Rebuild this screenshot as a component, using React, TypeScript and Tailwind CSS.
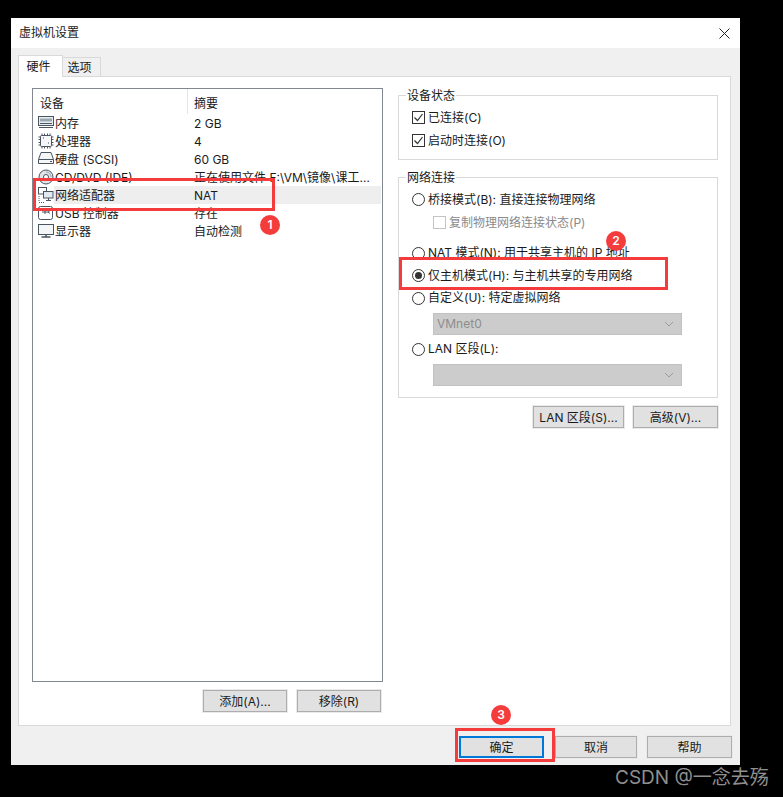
import type { ReactNode } from "react";

const stroke = "#4a5560";

function MemoryIcon() {
  return (
    <svg width="16" height="16" viewBox="0 0 16 16" fill="none" stroke={stroke}>
      <rect x="0.5" y="1.5" width="15" height="9" fill="#e8edf1" />
      <rect x="2" y="3.5" width="12" height="3" fill="#9aa7b2" stroke="none" />
      <path d="M2 8.5h12M1 12.5h14" />
    </svg>
  );
}

function CpuIcon() {
  return (
    <svg width="16" height="16" viewBox="0 0 16 16" fill="none" stroke={stroke}>
      <rect x="2.5" y="2.5" width="11" height="11" rx="1" fill="#f4f6f7" />
      <path d="M4 0.5v2M6.5 0.5v2M9.5 0.5v2M12 0.5v2M4 13.5v2M6.5 13.5v2M9.5 13.5v2M12 13.5v2M0.5 4h2M0.5 6.5h2M0.5 9.5h2M0.5 12h2M13.5 4h2M13.5 6.5h2M13.5 9.5h2M13.5 12h2" />
      <path d="M5 5h1M10 10h1" />
    </svg>
  );
}

function DiskIcon() {
  return (
    <svg width="16" height="16" viewBox="0 0 16 16" fill="none" stroke={stroke}>
      <path d="M3 1.5h10l2.5 7v4h-15v-4z" fill="#f4f6f7" />
      <path d="M0.5 8.5h15M12 10.5h2" />
    </svg>
  );
}

function CdIcon() {
  return (
    <svg width="16" height="16" viewBox="0 0 16 16" fill="none" stroke={stroke}>
      <circle cx="8" cy="8" r="7" fill="#dfe4e8" />
      <circle cx="8" cy="8" r="2.5" fill="#fff" />
      <path d="M8 3a5 5 0 0 1 5 5" stroke="#9aa7b2" />
    </svg>
  );
}

function NetIcon() {
  return (
    <svg width="16" height="16" viewBox="0 0 16 16" fill="none" stroke={stroke}>
      <rect x="0.5" y="0.5" width="8" height="6.5" fill="#fff" />
      <rect x="5.5" y="4.5" width="9.5" height="6.5" fill="#dfeaf2" />
      <path d="M10.5 11v2M8 13.5h5" />
      <path d="M1 9v6M1 15.5h5" strokeDasharray="1 1" />
    </svg>
  );
}

function UsbIcon() {
  return (
    <svg width="16" height="16" viewBox="0 0 16 16" fill="none" stroke={stroke}>
      <rect x="0.5" y="1.5" width="14" height="13" rx="2" fill="#fff" />
      <path d="M4 7h6M7 5v4M10 7l2-1.5M10 7l2 1.5" />
    </svg>
  );
}

function MonitorIcon() {
  return (
    <svg width="16" height="16" viewBox="0 0 16 16" fill="none" stroke={stroke}>
      <rect x="0.5" y="1.5" width="15" height="10" fill="#f4f6f7" />
      <path d="M8 11.5v2M3.5 14h9" strokeWidth="1.5" />
    </svg>
  );
}

const devices = [
  { icon: <MemoryIcon />, name: "内存", summary: "2 GB" },
  { icon: <CpuIcon />, name: "处理器", summary: "4" },
  { icon: <DiskIcon />, name: "硬盘 (SCSI)", summary: "60 GB" },
  { icon: <CdIcon />, name: "CD/DVD (IDE)", summary: "正在使用文件 F:\\VM\\镜像\\课工…" },
  { icon: <NetIcon />, name: "网络适配器", summary: "NAT", selected: true },
  { icon: <UsbIcon />, name: "USB 控制器", summary: "存在" },
  { icon: <MonitorIcon />, name: "显示器", summary: "自动检测" },
];

function Btn({ children, className }: { children: ReactNode; className: string }) {
  return (
    <button type="button" className={"h-[22px] flex items-center justify-center pt-[2px] bg-[#e1e1e1] border border-[#adadad] outline outline-1 outline-[#eaeaea] " + className}>
      {children}
    </button>
  );
}

function Check({ label, checked, disabled }: { label: string; checked?: boolean; disabled?: boolean }) {
  return (
    <div className={"flex items-center h-[23px] gap-[3px] " + (disabled ? "ml-[21px] text-[#8a8a8a]" : "")}>
      <span className={"w-[13px] h-[13px] border flex items-center justify-center " + (disabled ? "border-[#c4c4c4]" : "border-[#333333]")}>
        {checked && (
          <svg width="11" height="11" viewBox="0 0 11 11" fill="none" stroke="#333333" strokeWidth="1.2">
            <path d="M1.5 5.5l3 3 5-6.5" />
          </svg>
        )}
      </span>
      {label}
    </div>
  );
}

function Radio({ label, checked, className }: { label: string; checked?: boolean; className: string }) {
  return (
    <div className={"flex items-center gap-[3px] " + className}>
      <span className="w-[13px] h-[13px] rounded-full border border-[#333333] flex items-center justify-center">
        {checked && <span className="w-[7px] h-[7px] rounded-full bg-[#333333]" />}
      </span>
      {label}
    </div>
  );
}

function DisabledSelect({ value, className }: { value?: string; className: string }) {
  return (
    <div className={"ml-[21px] w-[249px] h-[22px] bg-[#cccccc] border border-[#c2c2c2] flex items-center justify-between pl-[3px] pr-[7px] text-[#8c8c8c] " + className}>
      <span>{value}</span>
      <svg width="10" height="6" viewBox="0 0 10 6" fill="none" stroke="#9b9b9b">
        <path d="M1 1l4 4 4-4" />
      </svg>
    </div>
  );
}

function Marker({ n, className }: { n: number; className: string }) {
  return (
    <span className={"absolute w-[20px] h-[20px] rounded-full bg-[#f53c3c] text-white text-[12px] font-semibold flex items-center justify-center " + className}>
      {n}
    </span>
  );
}

export default function App() {
  return (
    <div className="relative w-[783px] h-[797px] overflow-hidden bg-black pt-[18px] pl-[11px] text-[12px] leading-[16px] text-[#1a1a1a] font-['Inter','Noto_Sans_CJK_SC',sans-serif]">
      <div className="w-[729px] h-[747px] bg-[#f0f0f0] flex flex-col">
        <div className="h-[30px] bg-white flex items-center justify-between pl-[8px] pr-[10px] shrink-0">
          <span>虚拟机设置</span>
          <svg width="11" height="11" viewBox="0 0 11 11" fill="none" stroke="#222222">
            <path d="M0.5 0.5l10 10M10.5 0.5l-10 10" />
          </svg>
        </div>

        <div className="flex items-end h-[28px] pl-[7px] shrink-0">
          <div className="relative z-10 -mb-px w-[45px] h-[22px] bg-white border border-b-0 border-[#d9d9d9] flex items-center justify-center pr-[4px]">硬件</div>
          <div className="w-[38px] h-[19px] border border-l-0 border-b-0 border-[#d9d9d9] flex items-center justify-center pr-[4px] pt-[2px]">选项</div>
        </div>

        <div className="ml-[7px] w-[713px] h-[650px] bg-white border border-[#d9d9d9] flex gap-[15px] pl-[13px] pt-[11px] shrink-0">
          <div className="w-[351px] flex flex-col">
            <div className="h-[594px] border border-[#828790]">
              <div className="flex h-[25px] items-center">
                <div className="w-[155px] h-full pl-[7px] pt-[4px] border-r border-[#e5e5e5] flex items-center">设备</div>
                <div className="pl-[6px] pt-[4px]">摘要</div>
              </div>
              {devices.map((d) => (
                <div key={d.name} className="flex h-[18px] items-center">
                  <div className="w-[21px] pl-[5px] shrink-0">{d.icon}</div>
                  <div className={"flex flex-1 h-full items-center mr-px " + (d.selected ? "bg-[#eeeeee]" : "")}>
                    <span className="w-[140px] pl-[1px] pt-[2px] shrink-0 whitespace-nowrap">{d.name}</span>
                    <span className="pt-[2px] whitespace-nowrap">{d.summary}</span>
                  </div>
                </div>
              ))}
            </div>
            <div className="flex justify-end gap-[10px] mt-[8px] pr-[2px]">
              <Btn className="w-[84px]">添加(A)...</Btn>
              <Btn className="w-[84px]">移除(R)</Btn>
            </div>
          </div>

          <div className="w-[320px] flex flex-col">
            <fieldset className="-mt-[1px] h-[73px] border border-[#d9d9d9] pl-[13px]">
              <legend className="-ml-[6px] px-[1px] translate-y-[1px]">设备状态</legend>
              <div className="mt-[3px]">
                <Check label="已连接(C)" checked />
                <Check label="启动时连接(O)" checked />
              </div>
            </fieldset>

            <fieldset className="mt-[9px] h-[229px] border border-[#d9d9d9] pl-[13px]">
              <legend className="-ml-[6px] px-[1px] translate-y-[1px]">网络连接</legend>
              <Radio label="桥接模式(B): 直接连接物理网络" className="h-[23px] mt-[3px]" />
              <Check label="复制物理网络连接状态(P)" disabled />
              <Radio label="NAT 模式(N): 用于共享主机的 IP 地址" className="h-[22px] mt-[8px]" />
              <Radio label="仅主机模式(H): 与主机共享的专用网络" checked className="h-[23px]" />
              <Radio label="自定义(U): 特定虚拟网络" className="h-[22px]" />
              <DisabledSelect value="VMnet0" className="mt-[4px]" />
              <Radio label="LAN 区段(L):" className="h-[22px] mt-[3px]" />
              <DisabledSelect className="mt-[4px]" />
            </fieldset>

            <div className="flex justify-end gap-[9px] mt-[8px]">
              <Btn className="w-[91px]">LAN 区段(S)...</Btn>
              <Btn className="w-[85px]">高级(V)...</Btn>
            </div>
          </div>
        </div>

        <div className="flex justify-end gap-[10px] pr-[8px] mt-[10px]">
          <button type="button" className="w-[85px] h-[22px] bg-[#e1e1e1] border-2 border-[#0078d7] flex items-center justify-center pt-[2px] mr-[1px]">确定</button>
          <Btn className="w-[82px]">取消</Btn>
          <Btn className="w-[85px]">帮助</Btn>
        </div>
      </div>

      <div className="absolute left-[33px] top-[178px] w-[242px] h-[33px] border-[3px] border-[#f53c3c]" />
      <div className="absolute left-[399px] top-[257px] w-[269px] h-[33px] border-[3px] border-[#f53c3c]" />
      <div className="absolute left-[455px] top-[728px] w-[100px] h-[34px] border-[3px] border-[#f53c3c]" />
      <Marker n={1} className="left-[260px] top-[215px]" />
      <Marker n={2} className="left-[606px] top-[231px]" />
      <Marker n={3} className="left-[491px] top-[705px]" />

      <span className="absolute left-[615px] top-[766px] text-[19px] leading-[24px] text-[#8f8f8f] whitespace-nowrap">CSDN @一念去殇</span>
    </div>
  );
}
